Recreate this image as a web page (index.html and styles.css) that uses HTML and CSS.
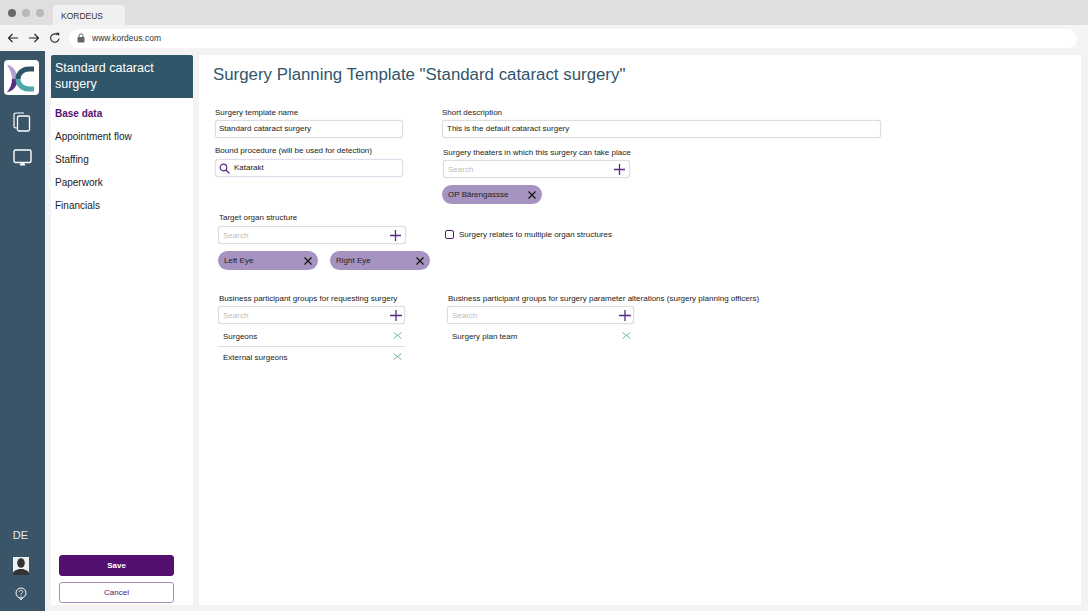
FILE: index.html
```html
<!DOCTYPE html>
<html lang="en">
<head>
<meta charset="utf-8">
<title>KORDEUS</title>
<link rel="stylesheet" href="styles.css">
</head>
<body>
<div class="tabstrip">
  <div class="dots"><i class="dot dark"></i><i class="dot"></i><i class="dot"></i></div>
  <div class="tab">KORDEUS</div>
</div>
<div class="addressbar">
  <svg class="nav-ico" width="12" height="12" viewBox="0 0 12 12"><path d="M11 6H1.500M5.500 2 1.500 6l4 4" fill="none" stroke="#222" stroke-width="1.100"/></svg>
  <svg class="nav-ico" width="12" height="12" viewBox="0 0 12 12"><path d="M1 6h9.500M6.500 2l4 4-4 4" fill="none" stroke="#222" stroke-width="1.100"/></svg>
  <svg class="nav-ico" width="12" height="12" viewBox="0 0 12 12"><path d="M10 6.500A4.200 4.200 0 1 1 8.500 2.800" fill="none" stroke="#222" stroke-width="1.100"/><path d="M7 .8h3.200V4z" fill="#222"/></svg>
  <div class="url">
    <svg width="8" height="10" viewBox="0 0 8 10"><rect x=".5" y="4" width="7" height="5.500" rx="1" fill="#666"/><path d="M2 4V2.800a2 2 0 0 1 4 0V4" fill="none" stroke="#666"/></svg>
    <span>www.kordeus.com</span>
  </div>
</div>
<div class="app">
  <aside class="rail">
    <div class="logo">
      <svg width="34" height="34" viewBox="0 0 34 34">
        <path d="M3 4C8 4 13 10 14 18L8 18C8 13 6 8 3 4Z" fill="#b3a1cc"/>
        <path d="M14 18C13 26 8 31 3 31 6 28 8 23 8 18Z" fill="#55307f"/>
        <path d="M30 8H25C19 8 14 12 14 18" fill="none" stroke="#2f5468" stroke-width="5"/>
        <path d="M14 18C14 24 19 28 25 28H30" fill="none" stroke="#4ea6a6" stroke-width="5"/>
      </svg>
    </div>
    <svg class="rail-ico" width="18" height="20" viewBox="0 0 18 20"><path d="M4 16H2.800A1.800 1.800 0 0 1 1 14.200V2.800A1.800 1.800 0 0 1 2.800 1H11" fill="none" stroke="#fff" stroke-width="1.200"/><rect x="4.500" y="4" width="12" height="15" rx="1.500" fill="none" stroke="#fff" stroke-width="1.300"/></svg>
    <svg class="rail-ico second" width="20" height="18" viewBox="0 0 20 18"><rect x="1" y="1" width="17" height="12.500" rx="1.500" fill="none" stroke="#fff" stroke-width="1.400"/><path d="M7 16h5l-1.500-2h-2z" fill="#fff" stroke="#fff"/></svg>
    <div class="rail-spacer"></div>
    <div class="lang">DE</div>
    <div class="avatar"><svg width="16" height="18" viewBox="0 0 16 18"><rect width="16" height="18" fill="#f0f0f0"/><ellipse cx="8" cy="6" rx="3.800" ry="4.800" fill="#333"/><path d="M0 18v-2c1-3 4-3 6-4h4c2 1 5 1 6 4v2z" fill="#333"/></svg></div>
    <svg class="help" width="12" height="14" viewBox="0 0 12 14"><circle cx="6" cy="6" r="5" fill="none" stroke="#fff"/><path d="M4.300 4.800C4.300 2.800 7.700 2.800 7.700 4.800 7.700 6 6 6 6 7.500M6 8.500v1M4.500 11 6 13l1.500-2" fill="none" stroke="#fff" stroke-width=".9"/></svg>
  </aside>
  <nav class="side">
    <h2 class="side-head">Standard cataract surgery</h2>
    <ul class="menu">
      <li class="active">Base data</li>
      <li>Appointment flow</li>
      <li>Staffing</li>
      <li>Paperwork</li>
      <li>Financials</li>
    </ul>
    <div class="actions">
      <button class="btn save">Save</button>
      <button class="btn cancel">Cancel</button>
    </div>
  </nav>
  <main class="main">
    <h1 class="title">Surgery Planning Template "Standard cataract surgery"</h1>
    <div class="form-top">
      <div class="col-left">
        <label class="lbl">Surgery template name</label>
        <div class="field wide"><span class="val">Standard cataract surgery</span></div>
        <label class="lbl second">Bound procedure (will be used for detection)</label>
        <div class="field wide search-field">
          <svg width="11" height="11" viewBox="0 0 11 11"><circle cx="4.500" cy="4.500" r="3.300" fill="none" stroke="#5a2a85" stroke-width="1.200"/><path d="M7 7l3.500 3.500" stroke="#5a2a85" stroke-width="1.300"/></svg>
          <span>Katarakt</span>
        </div>
        <div class="organ">
          <label class="lbl">Target organ structure</label>
          <div class="field search"><span>Search</span><svg class="plus" width="11" height="11" viewBox="0 0 11 11"><path d="M5.500 0v11M0 5.500h11" stroke="#5a2a85" stroke-width="1.300"/></svg></div>
          <div class="chips">
            <div class="chip organ-chip"><span>Left Eye</span><svg width="8" height="8" viewBox="0 0 8 8"><path d="M.5.500l7 7M7.500.500l-7 7" stroke="#111" stroke-width="1.200"/></svg></div>
            <div class="chip organ-chip"><span>Right Eye</span><svg width="8" height="8" viewBox="0 0 8 8"><path d="M.5.500l7 7M7.500.500l-7 7" stroke="#111" stroke-width="1.200"/></svg></div>
          </div>
        </div>
      </div>
      <div class="col-right">
        <label class="lbl">Short description</label>
        <div class="field desc"><span class="val">This is the default cataract surgery</span></div>
        <label class="lbl theaters">Surgery theaters in which this surgery can take place</label>
        <div class="field search"><span>Search</span><svg class="plus" width="11" height="11" viewBox="0 0 11 11"><path d="M5.500 0v11M0 5.500h11" stroke="#5a2a85" stroke-width="1.300"/></svg></div>
        <div class="chip op-chip"><span>OP Bärengassse</span><svg width="8" height="8" viewBox="0 0 8 8"><path d="M.5.500l7 7M7.500.500l-7 7" stroke="#111" stroke-width="1.200"/></svg></div>
        <div class="check"><i class="box"></i><span>Surgery relates to multiple organ structures</span></div>
      </div>
    </div>
    <div class="form-bottom">
      <div class="group group-a">
        <label class="lbl">Business participant groups for requesting surgery</label>
        <div class="field search"><span>Search</span><svg class="plus big" width="12" height="11" viewBox="0 0 12 11"><path d="M6 0v11M0 5.500h12" stroke="#5a2a85" stroke-width="1.300"/></svg></div>
        <div class="row first line"><span>Surgeons</span><svg width="9" height="7" viewBox="0 0 9 7"><path d="M.5.500l8 6M8.500.500l-8 6" stroke="#4f9f96" stroke-width=".8"/></svg></div>
        <div class="row"><span>External surgeons</span><svg width="9" height="7" viewBox="0 0 9 7"><path d="M.5.500l8 6M8.500.500l-8 6" stroke="#4f9f96" stroke-width=".8"/></svg></div>
      </div>
      <div class="group group-b">
        <label class="lbl">Business participant groups for surgery parameter alterations (surgery planning officers)</label>
        <div class="field search"><span>Search</span><svg class="plus big" width="12" height="11" viewBox="0 0 12 11"><path d="M6 0v11M0 5.500h12" stroke="#5a2a85" stroke-width="1.300"/></svg></div>
        <div class="row first"><span>Surgery plan team</span><svg width="9" height="7" viewBox="0 0 9 7"><path d="M.5.500l8 6M8.500.500l-8 6" stroke="#4f9f96" stroke-width=".8"/></svg></div>
      </div>
    </div>
  </main>
</div>
</body>
</html>
```
FILE: styles.css
```css
* { box-sizing: border-box; }
html, body { margin: 0; height: 100%; overflow: hidden; }
body {
  width: 1088px; height: 611px;
  display: flex; flex-direction: column;
  font-family: "Liberation Sans", Arial, sans-serif;
  font-size: 8px; color: #1a1a1a; background: #f3f3f3;
}
.tabstrip { height: 25px; background: #dfdfdf; display: flex; align-items: flex-end; padding-left: 8px; }
.dots { display: flex; gap: 6px; align-self: flex-start; margin-top: 9px; width: 45px; }
.dot { width: 8px; height: 8px; border-radius: 50%; background: #b9b9b9; }
.dot.dark { background: #6a6a6a; }
.tab { width: 72px; height: 20px; background: #f0f0f0; border-radius: 3px 3px 0 0; padding: 6px 0 0 8px; font-size: 8.500px; line-height: 10px; color: #333; }
.addressbar { height: 26px; background: #f4f4f4; display: flex; align-items: center; padding: 0 11px 0 7px; gap: 9px; }
.nav-ico { flex: none; }
.url { flex: 1; height: 19px; margin-left: -1px; background: #fff; border-radius: 10px; display: flex; align-items: center; gap: 7px; padding-left: 8px; font-size: 8.500px; color: #333; }
.app { flex: 1; display: flex; min-height: 0; }
.rail { width: 45px; background: #3b5568; display: flex; flex-direction: column; align-items: center; padding: 9px 3px 10px 0; margin-right: 6px; }
.logo { width: 35px; height: 35px; background: #fff; border-radius: 4px; display: flex; align-items: center; justify-content: center; }
.rail-ico { margin: 17px 0 0 2px; }
.rail-ico.second { margin: 17px 0 0 3px; }
.rail-spacer { flex: 1; }
.lang { color: #e8e8e8; font-size: 11px; line-height: 13px; margin: 0 1px 15px 0; }
.avatar { width: 16px; height: 18px; margin-bottom: 12px; }
.avatar svg { display: block; }
.side { width: 142px; margin: 4px 6px 6px 0; background: #fff; display: flex; flex-direction: column; }
.side-head { margin: 0; height: 43px; padding: 5px 4px; background: #30566a; border-radius: 2px 2px 0 0; color: #fff; font-size: 12.500px; line-height: 16px; font-weight: 400; }
.menu { list-style: none; margin: 4px 0 0; padding: 0 0 0 4px; font-size: 10px; line-height: 23px; color: #222; }
.menu li { height: 22.900px; }
.menu .active { color: #54146f; font-weight: 700; }
.actions { margin-top: auto; padding: 0 19px 2px 8px; display: flex; flex-direction: column; gap: 6px; }
.btn { height: 21px; width: 115px; border-radius: 3px; font: 8px/19px "Liberation Sans", Arial, sans-serif; padding: 0 0 1px; }
.save { background: #54106e; border: 1px solid #54106e; color: #fff; font-weight: 700; }
.cancel { background: #fff; border: 1px solid #a98fc0; color: #54146f; }
.main { flex: 1; margin: 4px 7px 6px 0; background: #fff; padding: 0 0 0 14px; }
.title { margin: 0; font-size: 16.850px; line-height: 22px; padding-top: 9px; font-weight: 400; color: #30566a; }
.form-top { display: flex; margin-top: 22px; }
.col-left { width: 227px; margin-left: 2px; }
.col-right { flex: 1; }
.lbl { display: block; font-size: 8px; line-height: 10px; color: #222; }
.field { height: 18px; border: 1px solid #ddd; border-radius: 3px; background: #fff; display: flex; align-items: center; padding: 0 3px; font-size: 8px; box-shadow: 0 0 1px #ccc; }
.val { margin-top: -2px; }
.desc .val { margin-left: 1px; }
.wide { width: 188px; margin-top: 2px; }
.lbl.second { margin-top: 8px; }
.search-field { margin-top: 3px; border-color: #e4dcec; gap: 4px; }
.search-field span { margin-top: -2px; }
.organ { margin: 36px 0 0 3px; }
.organ .lbl { margin-left: 1px; }
.search { width: 188px; margin-top: 3px; justify-content: space-between; color: #bdbdbd; padding: 0 4px; }
.plus { margin-right: 0; }
.chips { display: flex; gap: 12px; margin-top: 7px; }
.chip { height: 19px; border-radius: 10px; background: #a693bf; display: flex; align-items: center; justify-content: space-between; padding: 0 6px; color: #222; font-size: 8px; }
.organ-chip { width: 100px; }
.op-chip { width: 100px; margin-top: 7px; }
.desc { width: 439px; margin-top: 2px; }
.theaters { margin: 10px 0 0 1px; }
.col-right .search { margin: 2px 0 0 1px; width: 187px; }
.check { display: flex; align-items: center; gap: 5px; margin: 26px 0 0 3px; font-size: 8px; color: #222; }
.box { width: 9px; height: 9px; border: 1.300px solid #4f1a70; border-radius: 2px; }
.form-bottom { display: flex; margin-top: 24px; }
.group { width: 187px; }
.group-a { margin-left: 5px; }
.group-b { margin-left: 42px; }
.group .lbl { white-space: nowrap; margin-left: 1px; }
.group .search { margin-top: 2px; width: 187px; }
.group .plus { margin-right: -2px; }
.row { display: flex; align-items: center; justify-content: space-between; height: 21px; padding: 0 3px 0 5px; font-size: 8px; color: #222; }
.row.first { margin-top: 2px; }
.row.line { border-bottom: 1px solid #ddd; }
.row svg { margin-top: -2px; }
```
